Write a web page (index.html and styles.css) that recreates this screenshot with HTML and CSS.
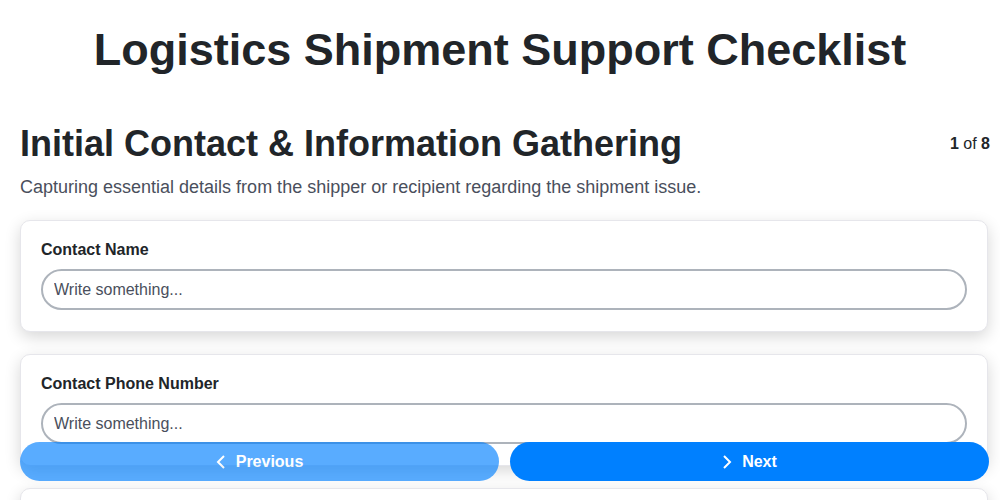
FILE: index.html
```html
<!DOCTYPE html>
<html lang="en">
<head>
<meta charset="utf-8">
<title>Logistics Shipment Support Checklist</title>
<link rel="stylesheet" href="styles.css">
</head>
<body>
<h1 class="title">Logistics Shipment Support Checklist</h1>
<main class="page">
  <section class="step">
    <div class="step-header">
      <h2 class="step-title">Initial Contact &amp; Information Gathering</h2>
      <div class="step-count"><b>1</b> of <b>8</b></div>
    </div>
    <p class="step-desc">Capturing essential details from the shipper or recipient regarding the shipment issue.</p>
    <div class="cards">
      <div class="card">
        <label class="field-label" for="f1">Contact Name</label>
        <input class="field-input" id="f1" type="text" placeholder="Write something...">
      </div>
      <div class="card">
        <label class="field-label" for="f2">Contact Phone Number</label>
        <input class="field-input" id="f2" type="text" placeholder="Write something...">
      </div>
      <div class="card">
        <label class="field-label" for="f3">Contact Email</label>
        <input class="field-input" id="f3" type="text" placeholder="Write something...">
      </div>
    </div>
  </section>
</main>
<nav class="nav">
  <button class="btn btn-prev" type="button">
    <svg class="chev" viewBox="0 0 10 16" width="10" height="16"><path d="M8 2 L2 8 L8 14" fill="none" stroke="currentColor" stroke-width="2"/></svg>
    Previous
  </button>
  <button class="btn btn-next" type="button">
    <svg class="chev" viewBox="0 0 10 16" width="10" height="16"><path d="M2 2 L8 8 L2 14" fill="none" stroke="currentColor" stroke-width="2"/></svg>
    Next
  </button>
</nav>
</body>
</html>
```
FILE: styles.css
```css
html, body {
  margin: 0;
  padding: 0;
  background: #ffffff;
  font-family: "Liberation Sans", Arial, sans-serif;
  color: #212529;
  overflow: hidden;
}
.title {
  margin: 0;
  padding-top: 24px;
  height: 76px;
  font-size: 45px;
  line-height: 52px;
  font-weight: 700;
  text-align: center;
  color: #212529;
}
.page {
  padding: 0 12px 0 20px;
}
.step-header {
  display: flex;
  justify-content: space-between;
  align-items: center;
  margin-top: 22px;
  margin-right: -2px;
}
.step-title {
  margin: 0;
  font-size: 36px;
  line-height: 44px;
  font-weight: 700;
}
.step-count {
  font-size: 16px;
  line-height: 20px;
}
.step-desc {
  margin: 8px 0 0;
  font-size: 18px;
  line-height: 26px;
  color: #4a4f5c;
}
.cards {
  margin-top: 20px;
  display: flex;
  flex-direction: column;
  gap: 22px;
}
.card {
  border: 1px solid #e6e6eb;
  border-radius: 10px;
  padding: 19px 20px 21px;
  background: #fff;
  box-shadow: 0 5px 16px rgba(0, 0, 0, 0.16);
  display: flex;
  flex-direction: column;
}
.field-label {
  font-size: 16px;
  line-height: 19px;
  font-weight: 700;
  margin-bottom: 10px;
}
.field-input {
  height: 41px;
  box-sizing: border-box;
  border: 2px solid #adb3bb;
  border-radius: 21px;
  padding: 0 11px;
  font-family: inherit;
  font-size: 16px;
  color: #212529;
  background: #fff;
  outline: none;
}
.field-input::placeholder {
  color: #4a4f5c;
  opacity: 1;
}
.nav {
  position: fixed;
  left: 20px;
  right: 11px;
  bottom: 19px;
  display: flex;
  gap: 11px;
}
.btn {
  flex: 1;
  height: 39px;
  border: none;
  border-radius: 20px;
  background: #0080ff;
  color: #fff;
  font-family: inherit;
  font-size: 16px;
  font-weight: 700;
  display: flex;
  align-items: center;
  justify-content: center;
  gap: 10px;
}
.btn-prev {
  opacity: 0.65;
}
.chev {
  display: block;
}
```
